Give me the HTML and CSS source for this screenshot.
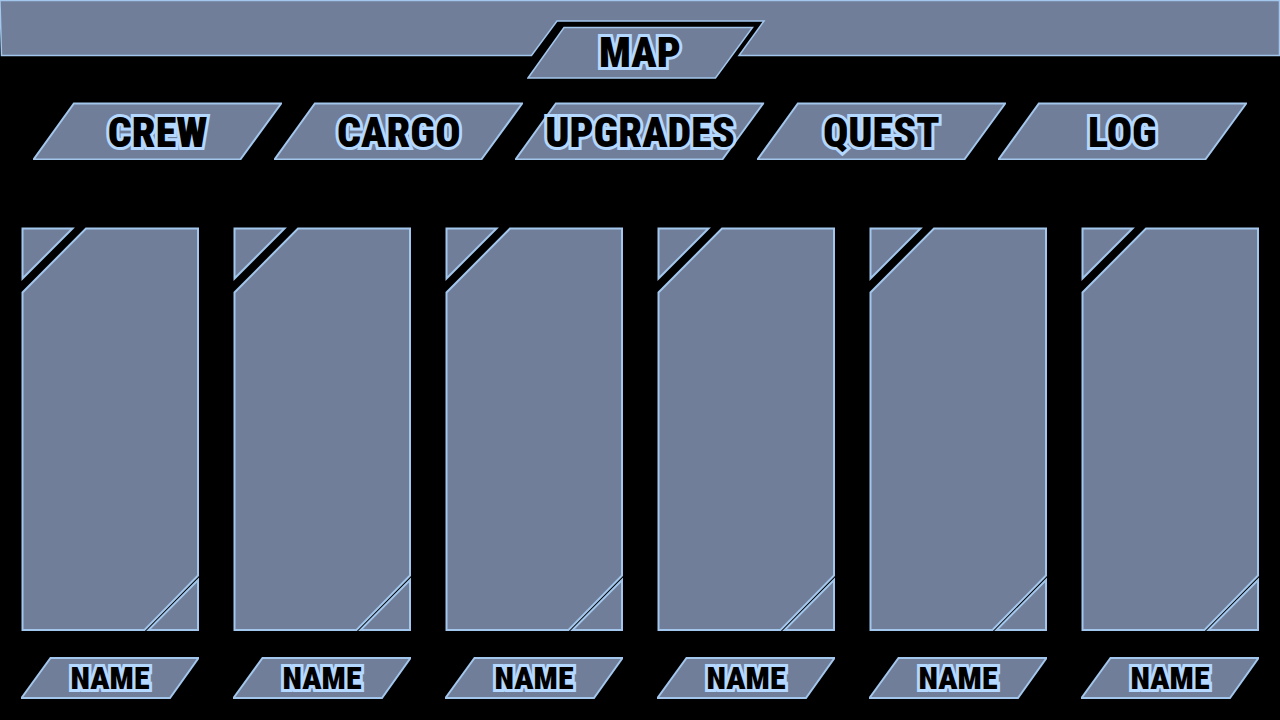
FILE: index.html
```
<!DOCTYPE html>
<html lang="en">
<head>
<meta charset="utf-8">
<title>Crew</title>
<link rel="stylesheet" href="styles.css">
</head>
<body>
<svg class="defs" aria-hidden="true">
  <symbol id="tab" viewBox="0 0 250 58" preserveAspectRatio="none"><path d="M41 1.5H249L208 57.5H0.5Z"/></symbol>
  <symbol id="plate" viewBox="0 0 178 42" preserveAspectRatio="none"><path d="M29.500 1H177.500L149 41H0.500Z"/></symbol>
</svg>
<header class="top">
  <svg class="bar" viewBox="0 0 1280 57" preserveAspectRatio="none" aria-hidden="true"><path d="M0 0.500H1279.500V55.500H739L764 21H557L531.500 55.500H1.500Z"/></svg>
  <button class="tab map" type="button">
    <svg class="shape" viewBox="0 0 227 53" preserveAspectRatio="none" aria-hidden="true"><path d="M37 1.500H225.500L188.500 52H1Z"/></svg>
    <span class="label">MAP</span>
  </button>
</header>
<nav class="tabs">
  <button class="tab" type="button"><svg class="shape" aria-hidden="true"><use href="#tab"/></svg><span class="label">CREW</span></button>
  <button class="tab" type="button"><svg class="shape" aria-hidden="true"><use href="#tab"/></svg><span class="label">CARGO</span></button>
  <button class="tab" type="button"><svg class="shape" aria-hidden="true"><use href="#tab"/></svg><span class="label">UPGRADES</span></button>
  <button class="tab" type="button"><svg class="shape" aria-hidden="true"><use href="#tab"/></svg><span class="label">QUEST</span></button>
  <button class="tab" type="button"><svg class="shape" aria-hidden="true"><use href="#tab"/></svg><span class="label">LOG</span></button>
</nav>
<main class="crew" id="crew"></main>
<script src="crew.js"></script>
</body>
</html>
```
FILE: crew.js
```
const members = ["NAME", "NAME", "NAME", "NAME", "NAME", "NAME"];

document.getElementById("crew").innerHTML = members.map(name => `
  <article class="member">
    <svg class="portrait" viewBox="0 0 178 404" preserveAspectRatio="none" aria-hidden="true">
      <path d="M1.500 1.500H51.500L1.500 51.500Z"/>
      <path d="M65 1.500H177V348.500L123.500 403H1.500V65.500Z"/>
      <path d="M177 353V403H127.500Z"/>
    </svg>
    <div class="plate"><svg class="shape" aria-hidden="true"><use href="#plate"/></svg><span class="label">${name}</span></div>
  </article>`).join("");
```
FILE: styles.css
```
* { box-sizing: border-box; }

body {
  margin: 0;
  min-height: 100vh;
  display: flex;
  flex-direction: column;
  background: #000;
  color: #000;
  font-family: "Roboto Condensed", "Liberation Sans Narrow", "DejaVu Sans Condensed", sans-serif;
  font-weight: 900;
}

.defs { position: absolute; width: 0; height: 0; }

path {
  fill: #717e99;
  stroke: #a2c6ec;
  stroke-width: 2px;
  vector-effect: non-scaling-stroke;
}

.top { display: grid; }
.bar { grid-area: 1 / 1; width: 100%; height: 57px; }
.bar path, .tab path, .plate path { stroke-width: 1.5px; }

.tab, .plate { display: grid; place-items: center; }
.tab {
  height: 58px;
  padding: 0;
  border: 0;
  background: none;
  color: inherit;
  font: inherit;
  font-size: 42px;
  line-height: 54px;
  cursor: pointer;
}
.shape { grid-area: 1 / 1; width: 100%; height: 100%; }
.label {
  grid-area: 1 / 1;
  position: relative;
  white-space: nowrap;
  -webkit-text-stroke: 6px #b4d8ff;
  stroke-linejoin: round;
  paint-order: stroke fill;
}
.tabs .label { padding-top: 4px; }

.map {
  grid-area: 1 / 1;
  justify-self: center;
  width: 227px;
  height: 53px;
  margin-top: 26px;
  line-height: 53px;
}

.tabs {
  display: grid;
  grid-template-columns: repeat(5, minmax(0, 1fr));
  padding: 0 41px 0 33px;
  margin-top: 23px;
}
.tabs .tab { margin-right: -8px; }

.crew {
  flex: 1;
  display: grid;
  grid-template-columns: repeat(6, minmax(0, 1fr));
  gap: 34px;
  padding: 67px 21px 21px;
}
.member { display: flex; flex-direction: column; gap: 26px; }
.portrait { display: block; width: 100%; flex: 1 1 0; min-height: 0; }
.plate { height: 42px; font-size: 32px; line-height: 42px; }
```
